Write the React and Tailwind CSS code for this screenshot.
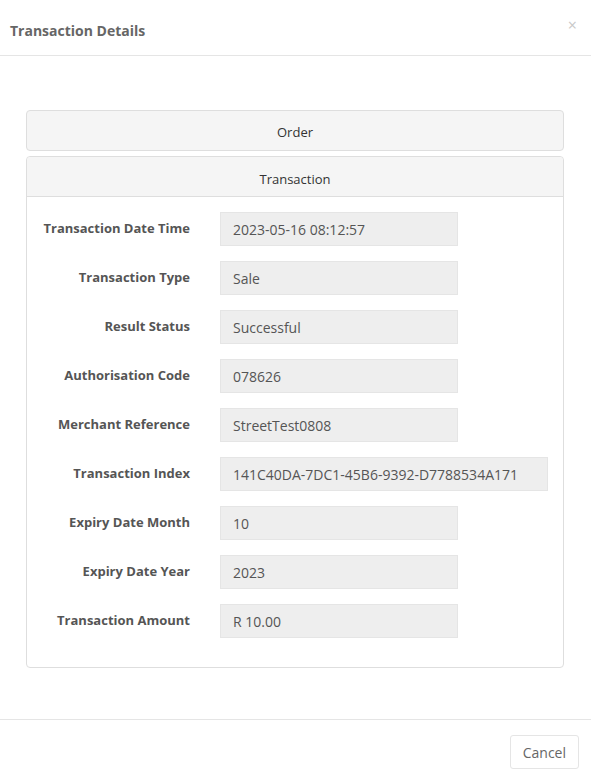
import React from "react";

const rows = [
  ["Transaction Date Time", "2023-05-16 08:12:57"],
  ["Transaction Type", "Sale"],
  ["Result Status", "Successful"],
  ["Authorisation Code", "078626"],
  ["Merchant Reference", "StreetTest0808"],
  ["Transaction Index", "141C40DA-7DC1-45B6-9392-D7788534A171", true],
  ["Expiry Date Month", "10"],
  ["Expiry Date Year", "2023"],
  ["Transaction Amount", "R 10.00"],
];

export default function App() {
  return (
    <div
      className="w-[591px] h-[778px] bg-white flex flex-col text-[#555]"
      style={{ fontFamily: '"Open Sans", "Liberation Sans", sans-serif' }}
    >
      <div className="h-[56px] border-b border-[#e5e5e5] flex items-start justify-between pl-[10px] pr-[14px]">
        <div className="pt-[21px] text-[14px] font-bold leading-[20px] text-[#666]">
          Transaction Details
        </div>
        <div className="pt-[15px] text-[16px] leading-[20px] text-[#c8c8c8]">×</div>
      </div>
      <div className="flex-1 pt-[54px] pl-[26px] pr-[27px]">
        <div className="h-[41px] bg-[#f5f5f5] border border-[#dedede] rounded-[4px] flex items-start justify-center pt-[12px] text-[13px] leading-[18px] text-[#333]">
          Order
        </div>
        <div className="mt-[5px] border border-[#dedede] rounded-[4px]">
          <div className="h-[40px] bg-[#f5f5f5] border-b border-[#dedede] rounded-t-[4px] flex items-start justify-center pt-[13px] text-[13px] leading-[18px] text-[#333]">
            Transaction
          </div>
          <div className="pt-[15px] pb-[14px]">
            {rows.map(([label, value, wide]) => (
              <div key={label} className="flex items-center mb-[15px]">
                <div className="w-[163px] text-right text-[13px] font-bold text-[#555]">
                  {label}
                </div>
                <div
                  className={`ml-[30px] h-[34px] bg-[#eeeeee] border border-[#e5e5e5] flex items-center pl-[12px] text-[14px] text-[#555] ${
                    wide ? "w-[328px]" : "w-[238px]"
                  }`}
                >
                  {value}
                </div>
              </div>
            ))}
          </div>
        </div>
      </div>
      <div className="h-[59px] border-t border-[#e5e5e5] flex items-start justify-end pr-[12px] pt-[15px]">
        <button className="h-[34px] px-[12px] border border-[#e5e5e5] rounded-[3px] bg-white text-[14px] text-[#666]">
          Cancel
        </button>
      </div>
    </div>
  );
}
